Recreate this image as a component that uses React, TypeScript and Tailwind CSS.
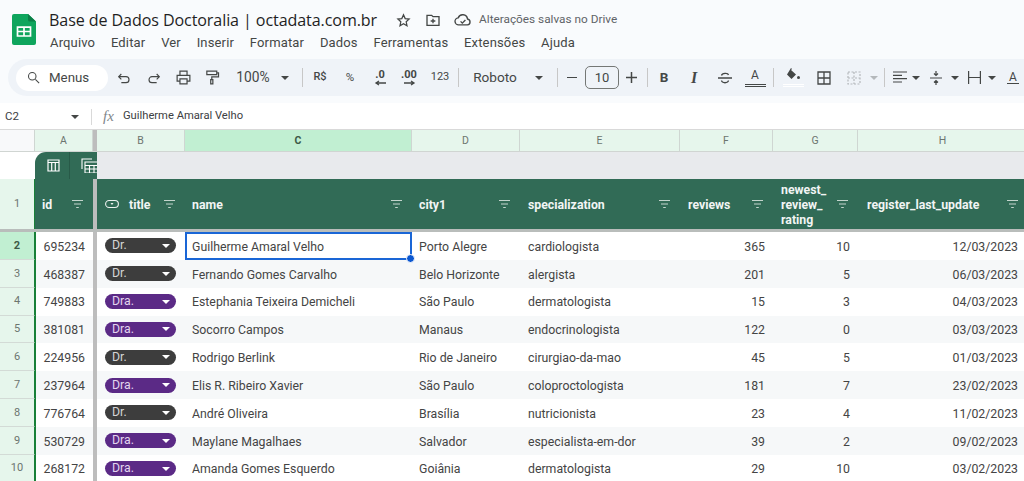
import React from "react";

const font = "font-['Roboto',sans-serif]";
const cols = "grid grid-cols-[35px_58px_4px_88px_227px_108px_160px_93px_85px_170px]";

interface Row {
  n: number;
  id: string;
  title: string;
  name: string;
  city: string;
  spec: string;
  reviews: string;
  rating: string;
  date: string;
}

const rows: Row[] = [
  { n: 2, id: "695234", title: "Dr.", name: "Guilherme Amaral Velho", city: "Porto Alegre", spec: "cardiologista", reviews: "365", rating: "10", date: "12/03/2023" },
  { n: 3, id: "468387", title: "Dr.", name: "Fernando Gomes Carvalho", city: "Belo Horizonte", spec: "alergista", reviews: "201", rating: "5", date: "06/03/2023" },
  { n: 4, id: "749883", title: "Dra.", name: "Estephania Teixeira Demicheli", city: "São Paulo", spec: "dermatologista", reviews: "15", rating: "3", date: "04/03/2023" },
  { n: 5, id: "381081", title: "Dra.", name: "Socorro Campos", city: "Manaus", spec: "endocrinologista", reviews: "122", rating: "0", date: "03/03/2023" },
  { n: 6, id: "224956", title: "Dr.", name: "Rodrigo Berlink", city: "Rio de Janeiro", spec: "cirurgiao-da-mao", reviews: "45", rating: "5", date: "01/03/2023" },
  { n: 7, id: "237964", title: "Dra.", name: "Elis R. Ribeiro Xavier", city: "São Paulo", spec: "coloproctologista", reviews: "181", rating: "7", date: "23/02/2023" },
  { n: 8, id: "776764", title: "Dr.", name: "André Oliveira", city: "Brasília", spec: "nutricionista", reviews: "23", rating: "4", date: "11/02/2023" },
  { n: 9, id: "530729", title: "Dra.", name: "Maylane Magalhaes", city: "Salvador", spec: "especialista-em-dor", reviews: "39", rating: "2", date: "09/02/2023" },
  { n: 10, id: "268172", title: "Dra.", name: "Amanda Gomes Esquerdo", city: "Goiânia", spec: "dermatologista", reviews: "29", rating: "10", date: "03/02/2023" },
];

const menus = ["Arquivo", "Editar", "Ver", "Inserir", "Formatar", "Dados", "Ferramentas", "Extensões", "Ajuda"];

const Ico = ({ children, w = 16, h = 16, vb = "0 0 24 24" }: { children: React.ReactNode; w?: number; h?: number; vb?: string }) => (
  <svg width={w} height={h} viewBox={vb} fill="none" stroke="#444746" strokeWidth="1.700" className="shrink-0">
    {children}
  </svg>
);

const Slot = ({ className, children }: { className: string; children?: React.ReactNode }) => (
  <div className={`flex shrink-0 items-center justify-center ${className}`}>{children}</div>
);

const Caret = ({ className = "border-t-[#444746]" }: { className?: string }) => (
  <span className={`h-0 w-0 shrink-0 border-x-[4px] border-t-[4px] border-x-transparent ${className}`} />
);

const Sep = () => <span className="h-[19px] w-px shrink-0 bg-[#c7c7c7]" />;

const Filter = () => (
  <svg width="13" height="10" viewBox="0 0 13 10" className="shrink-0" fill="none" stroke="#c4d5cd" strokeWidth="1">
    <path d="M1 1.500h11M3 5h7M5.200 8.500h2.600" />
  </svg>
);

const SheetsLogo = () => (
  <svg width="24" height="31" viewBox="0 0 24 33" preserveAspectRatio="none" className="shrink-0">
    <path d="M2 0h14l8 8v23a2 2 0 0 1-2 2H2a2 2 0 0 1-2-2V2a2 2 0 0 1 2-2z" fill="#0fa55d" />
    <path d="M16 0l8 8h-6a2 2 0 0 1-2-2z" fill="#0b7f47" />
    <path d="M5.500 14h13v9.500h-13zM12 14v9.500M5.500 18.700h13" fill="none" stroke="#fff" strokeWidth="1.700" />
  </svg>
);

const Pill = ({ title }: { title: string }) => (
  <div className={`flex h-[15px] w-[71px] items-center justify-between rounded-full pl-[7px] pr-[6px] text-[12.300px] ${title === "Dr." ? "bg-[#3d3d3d] text-[#d5d5d5]" : "bg-[#5b2a86] text-[#e2d5ee]"}`}>
    <span className="leading-[15px]">{title}</span>
    <span className="h-0 w-0 border-x-[4px] border-t-[4px] border-x-transparent border-t-white" />
  </div>
);

const Head = ({ label, className = "pl-[8px]" }: { label: string; className?: string }) => (
  <div className={`flex items-center justify-between bg-[#316b56] pr-[9px] text-[12.300px] font-bold text-[#f2f5f4] ${className}`}>
    <span className="pt-[2px]">{label}</span>
    <Filter />
  </div>
);

const Letter = ({ label, active = false }: { label: string; active?: boolean }) => (
  <div className={`flex items-center justify-center border-r border-[#cfd6d2] text-[10.500px] ${active ? "bg-[#c1efd2] font-bold text-[#3c5a47]" : "bg-[#e6f6ec] text-[#6c756f]"}`}>
    {label}
  </div>
);

export default function App() {
  return (
    <div className={`h-[481px] w-[1024px] overflow-hidden bg-white ${font} text-[#444]`}>
      {/* top */}
      <div className="h-[103px] bg-[#f9fbfd]">
        <div className="flex h-[59px] pl-[12px] pt-[14px]">
          <SheetsLogo />
          <div className="-mt-[5px] ml-[13px]">
            <div className="flex h-[22px] items-center">
              <span className="font-['Open_Sans',sans-serif] text-[16.100px] tracking-[-0.1px] text-[#1f1f1f]">Base de Dados Doctoralia | octadata.com.br</span>
              <svg width="15" height="15" viewBox="0 0 24 24" fill="none" stroke="#444746" strokeWidth="2" className="ml-[19px]">
                <path d="M12 3l2.700 6 6.300.7-4.700 4.300 1.300 6.500L12 17.200 6.400 20.500 7.700 14 3 9.700 9.300 9z" />
              </svg>
              <svg width="16" height="14" viewBox="0 0 24 20" fill="none" stroke="#444746" strokeWidth="2" className="ml-[14px]">
                <path d="M3 3h7l2 2h9v13H3zM12 8v7M8.500 11.500h7" />
              </svg>
              <svg width="18" height="14" viewBox="0 0 26 20" fill="none" stroke="#444746" strokeWidth="2" className="ml-[13px]">
                <path d="M7 17a5 5 0 0 1-1-10 7 7 0 0 1 13.500 1.500A4.300 4.300 0 0 1 19.500 17zM9.500 12l2.500 2.500 4.500-4.500" />
              </svg>
              <span className="ml-[7px] text-[11.800px] text-[#5f6368]">Alterações salvas no Drive</span>
            </div>
            <div className="ml-[1px] mt-[2px] flex h-[19px] items-center gap-[15.800px] text-[13px] tracking-[0.15px] text-[#444746]">
              {menus.map((m) => (
                <span key={m}>{m}</span>
              ))}
            </div>
          </div>
        </div>

        {/* toolbar */}
        <div className="ml-[8px] flex h-[37px] w-[1040px] items-center rounded-l-full bg-[#eff3f8] pl-[8px] text-[#444746]">
          <div className="flex h-[26px] w-[92px] shrink-0 items-center rounded-full bg-white pl-[10px] text-[13.300px]">
            <Ico w={15} h={15}><circle cx="10" cy="10" r="6" /><path d="M15 15l6 6" /></Ico>
            <span className="ml-[8px]">Menus</span>
          </div>
          <Slot className="w-[31px]">
            <Ico w={16} h={16}><path d="M8 6L4 10l4 4M4 10h11a4.500 4.500 0 0 1 0 9H8" /></Ico>
          </Slot>
          <Slot className="w-[30px]">
            <Ico w={16} h={16}><path d="M16 6l4 4-4 4M20 10H9a4.500 4.500 0 0 0 0 9h7" /></Ico>
          </Slot>
          <Slot className="w-[28px]">
            <Ico w={17} h={17}><path d="M7 8V3h10v5M7 17H3V9h18v8h-4M7 14h10v7H7z" /></Ico>
          </Slot>
          <Slot className="w-[30px]">
            <Ico w={17} h={17}><path d="M4 3h14v5H4zM18 5.500h2.500V11H11v4M9.500 15h3v6h-3z" /></Ico>
          </Slot>
          <Slot className="w-[52px] text-[13.800px]">100%</Slot>
          <Slot className="w-[12px]"><Caret /></Slot>
          <Slot className="w-[22px]"><Sep /></Slot>
          <Slot className="w-[14px] whitespace-nowrap text-[11px] font-medium">R$</Slot>
          <Slot className="w-[46px] text-[11.500px]">%</Slot>
          <Slot className="w-[14px] flex-col text-[11px] font-bold leading-[10px]">
            .0
            <svg width="13" height="6" viewBox="0 0 13 6" fill="none" stroke="#444746" strokeWidth="1.300" className="shrink-0"><path d="M12 3H2M5 1L2 3l3 2" /></svg>
          </Slot>
          <Slot className="w-[44px] flex-col text-[11px] font-bold leading-[10px]">
            .00
            <svg width="13" height="6" viewBox="0 0 13 6" fill="none" stroke="#444746" strokeWidth="1.300" className="shrink-0"><path d="M1 3h10M8 1l3 2-3 2" /></svg>
          </Slot>
          <Slot className="w-[18px] text-[11px]">123</Slot>
          <Slot className="w-[18px]"><Sep /></Slot>
          <Slot className="w-[56px] text-[13.600px]">Roboto</Slot>
          <Slot className="w-[32px]"><Caret /></Slot>
          <Slot className="w-[4px]"><Sep /></Slot>
          <Slot className="w-[26px]"><span className="h-[1.500px] w-[10px] bg-[#444746]" /></Slot>
          <Slot className="h-[23px] w-[34px] rounded-[5px] border border-[#747775] text-[13px]">10</Slot>
          <Slot className="w-[24px]">
            <svg width="11" height="11" viewBox="0 0 11 11" stroke="#444746" strokeWidth="1.500"><path d="M5.500 0v11M0 5.500h11" /></svg>
          </Slot>
          <Slot className="w-[8px]"><Sep /></Slot>
          <Slot className="w-[26px] text-[13.500px] font-bold">B</Slot>
          <Slot className="w-[34px] font-['Liberation_Serif',serif] text-[16px] font-bold italic">I</Slot>
          <Slot className="w-[28px]">
            <svg width="16" height="14" viewBox="0 0 16 14" fill="none" stroke="#444746" strokeWidth="1.300"><path d="M1 7h14M4.500 4.500C5 2 11 1.500 11.500 4M4.500 9.500C5 12.500 11 12.500 11.500 9.500" /></svg>
          </Slot>
          <Slot className="w-[32px] flex-col">
            <span className="text-[12px] leading-[13px]">A</span>
            <span className="mt-[2px] h-[3px] w-[21px] border-y border-[#444746]" />
          </Slot>
          <Slot className="w-[5px]"><Sep /></Slot>
          <Slot className="w-[34px] flex-col">
            <svg width="15" height="14" viewBox="0 0 15 14" fill="#444746"><path d="M5 0l1 1-1 1 5 4.500L5.500 11 1 6.500z" /><circle cx="12.500" cy="9.500" r="1.500" /></svg>
            <span className="mt-[2px] h-[3px] w-[21px] border-y border-white" />
          </Slot>
          <Slot className="w-[28px]">
            <svg width="14" height="14" viewBox="0 0 14 14" fill="none" stroke="#444746" strokeWidth="1.300"><path d="M1 1h12v12H1zM7 1v12M1 7h12" /></svg>
          </Slot>
          <Slot className="w-[32px]">
            <svg width="14" height="14" viewBox="0 0 14 14" fill="none" stroke="#b4b8bb" strokeWidth="1.200" strokeDasharray="2 1.500"><path d="M1 1h12v12H1zM7 1v12M1 7h12" /></svg>
          </Slot>
          <Slot className="w-[8px]"><Caret className="border-t-[#b4b8bb]" /></Slot>
          <Slot className="w-[12px]"><Sep /></Slot>
          <Slot className="w-[20px]">
            <svg width="14" height="13" viewBox="0 0 14 13" stroke="#444746" strokeWidth="1.200"><path d="M0 1h14M0 4.300h9M0 7.600h14M0 11h9" /></svg>
          </Slot>
          <Slot className="w-[12px]"><Caret /></Slot>
          <Slot className="w-[28px]">
            <svg width="12" height="14" viewBox="0 0 12 14" fill="none" stroke="#444746" strokeWidth="1.200"><path d="M0 7h12M6 0v4M4 2.500L6 4.500l2-2M6 14v-4M4 11.500l2-2 2 2" /></svg>
          </Slot>
          <Slot className="w-[10px]"><Caret /></Slot>
          <Slot className="w-[28px]">
            <svg width="13" height="13" viewBox="0 0 13 13" fill="none" stroke="#444746" strokeWidth="1.200"><path d="M.6 0v13M12.400 0v13M1 6.500h11" /></svg>
          </Slot>
          <Slot className="w-[8px]"><Caret /></Slot>
          <Slot className="w-[34px] flex-col">
            <span className="text-[12px] leading-[12px]">A</span>
            <span className="h-px w-[12px] bg-[#444746]" />
          </Slot>
        </div>
      </div>

      {/* formula bar */}
      <div className="flex h-[27px] items-center border-b border-[#d9d9d9] pt-[1px] text-[11.200px] text-[#3c4043]">
        <span className="ml-[5px] w-[66px] text-[11.500px]">C2</span>
        <Caret />
        <span className="ml-[12px] h-[16px] w-px bg-[#d9d9d9]" />
        <span className="ml-[11px] w-[20px] font-['Liberation_Serif',serif] text-[15px] italic text-[#80868b]">fx</span>
        <span>Guilherme Amaral Velho</span>
      </div>

      {/* column letters */}
      <div className={`${cols} h-[22px] border-b border-[#d0d5d2]`}>
        <div className="border-r border-[#cfd6d2] bg-[#f8f9fa]" />
        <Letter label="A" />
        <div className="bg-[#bdbdbd]" />
        <Letter label="B" />
        <Letter label="C" active />
        <Letter label="D" />
        <Letter label="E" />
        <Letter label="F" />
        <Letter label="G" />
        <Letter label="H" />
      </div>

      {/* table tab row */}
      <div className={`${cols} h-[27px]`}>
        <div className="bg-white" />
        <div className="col-span-2 flex items-center overflow-hidden rounded-tl-[11px] bg-[#316b56]">
          <div className="flex h-full w-[35px] shrink-0 items-center justify-center border-r border-[#285a48] pl-[3px]">
            <svg width="13" height="13" viewBox="0 0 13 13" fill="none" stroke="#fff" strokeWidth="1.200"><path d="M1 1h11v11H1zM1 3.500h11M4.700 3.500V12M8.300 3.500V12" /></svg>
          </div>
          <svg width="17" height="15" viewBox="0 0 17 15" fill="none" stroke="#fff" strokeWidth="1.100" className="ml-[11px] shrink-0"><path d="M1 11V1h10M4 4h13v11H4zM4 7.500h13M4 11h13M8.500 7.500V15M13 7.500V15" /></svg>
        </div>
        <div className="col-span-7 bg-[#e8eaed]" />
      </div>

      {/* header row */}
      <div className={`${cols} h-[53px] border-b-[3px] border-[#b9bdbb]`}>
        <div className="flex items-center justify-center border-r border-[#188038] bg-[#e6f6ec] text-[11px] text-[#6c756f]">1</div>
        <div className="flex items-center justify-between bg-[#316b56] pl-[7px] pr-[9px] text-[12.300px] font-bold text-[#f2f5f4]">
          <span className="pt-[2px]">id</span>
          <Filter />
        </div>
        <div className="bg-[#bdbdbd]" />
        <div className="flex items-center bg-[#316b56] pl-[8px] pr-[9px] text-[12.300px] font-bold text-[#f2f5f4]">
          <svg width="14" height="10" viewBox="0 0 14 10" fill="none" stroke="#eef2f0" strokeWidth="1.100" className="shrink-0"><rect x="0.600" y="1.500" width="12.800" height="7" rx="3.500" /><path d="M5.500 4h3L7 6z" fill="#eef2f0" stroke="none" /></svg>
          <span className="ml-[10px] pt-[2px]">title</span>
          <span className="ml-auto"><Filter /></span>
        </div>
        <Head label="name" className="pl-[7px]" />
        <Head label="city1" className="pl-[7px]" />
        <Head label="specialization" />
        <Head label="reviews" />
        <div className="flex items-center justify-between bg-[#316b56] pl-[8px] pr-[9px] text-[12.300px] font-bold leading-[15px] text-[#f2f5f4]">
          <span className="pt-[2px]">
            newest_
            <br />
            review_
            <br />
            rating
          </span>
          <Filter />
        </div>
        <Head label="register_last_update" className="pl-[9px]" />
      </div>

      {/* data */}
      {rows.map((r, i) => (
        <div key={r.n} className={`${cols} h-[27.850px] text-[12.300px] ${i % 2 ? "bg-[#f6f8f9]" : "bg-white"}`}>
          <div className={`flex items-center justify-center border-b border-r border-b-[#d3dbd6] border-r-[#188038] pt-[1px] text-[11px] ${i === 0 ? "bg-[#c1efd2] font-bold text-[#3c5a47]" : "bg-[#e6f6ec] text-[#6c756f]"}`}>
            {r.n}
          </div>
          <div className="flex items-center justify-end border-l border-[#188038] pr-[8px] pt-[2px]">{r.id}</div>
          <div className="bg-[#bdbdbd]" />
          <div className="flex items-center pl-[8px]">
            <Pill title={r.title} />
          </div>
          {i === 0 ? (
            <div className="relative z-10 flex items-center border-2 border-[#1a66d6] pl-[5px] pt-[2px]">
              {r.name}
              <span className="absolute -bottom-[5px] -right-[5px] h-[9px] w-[9px] rounded-full border border-white bg-[#0b57d0]" />
            </div>
          ) : (
            <div className="flex items-center pl-[7px] pt-[2px]">{r.name}</div>
          )}
          <div className="flex items-center pl-[7px] pt-[2px]">{r.city}</div>
          <div className="flex items-center pl-[8px] pt-[2px]">{r.spec}</div>
          <div className="flex items-center justify-end pr-[8px] pt-[2px]">{r.reviews}</div>
          <div className="flex items-center justify-end pr-[8px] pt-[2px]">{r.rating}</div>
          <div className="flex items-center justify-end pr-[10px] pt-[2px]">{r.date}</div>
        </div>
      ))}
    </div>
  );
}
